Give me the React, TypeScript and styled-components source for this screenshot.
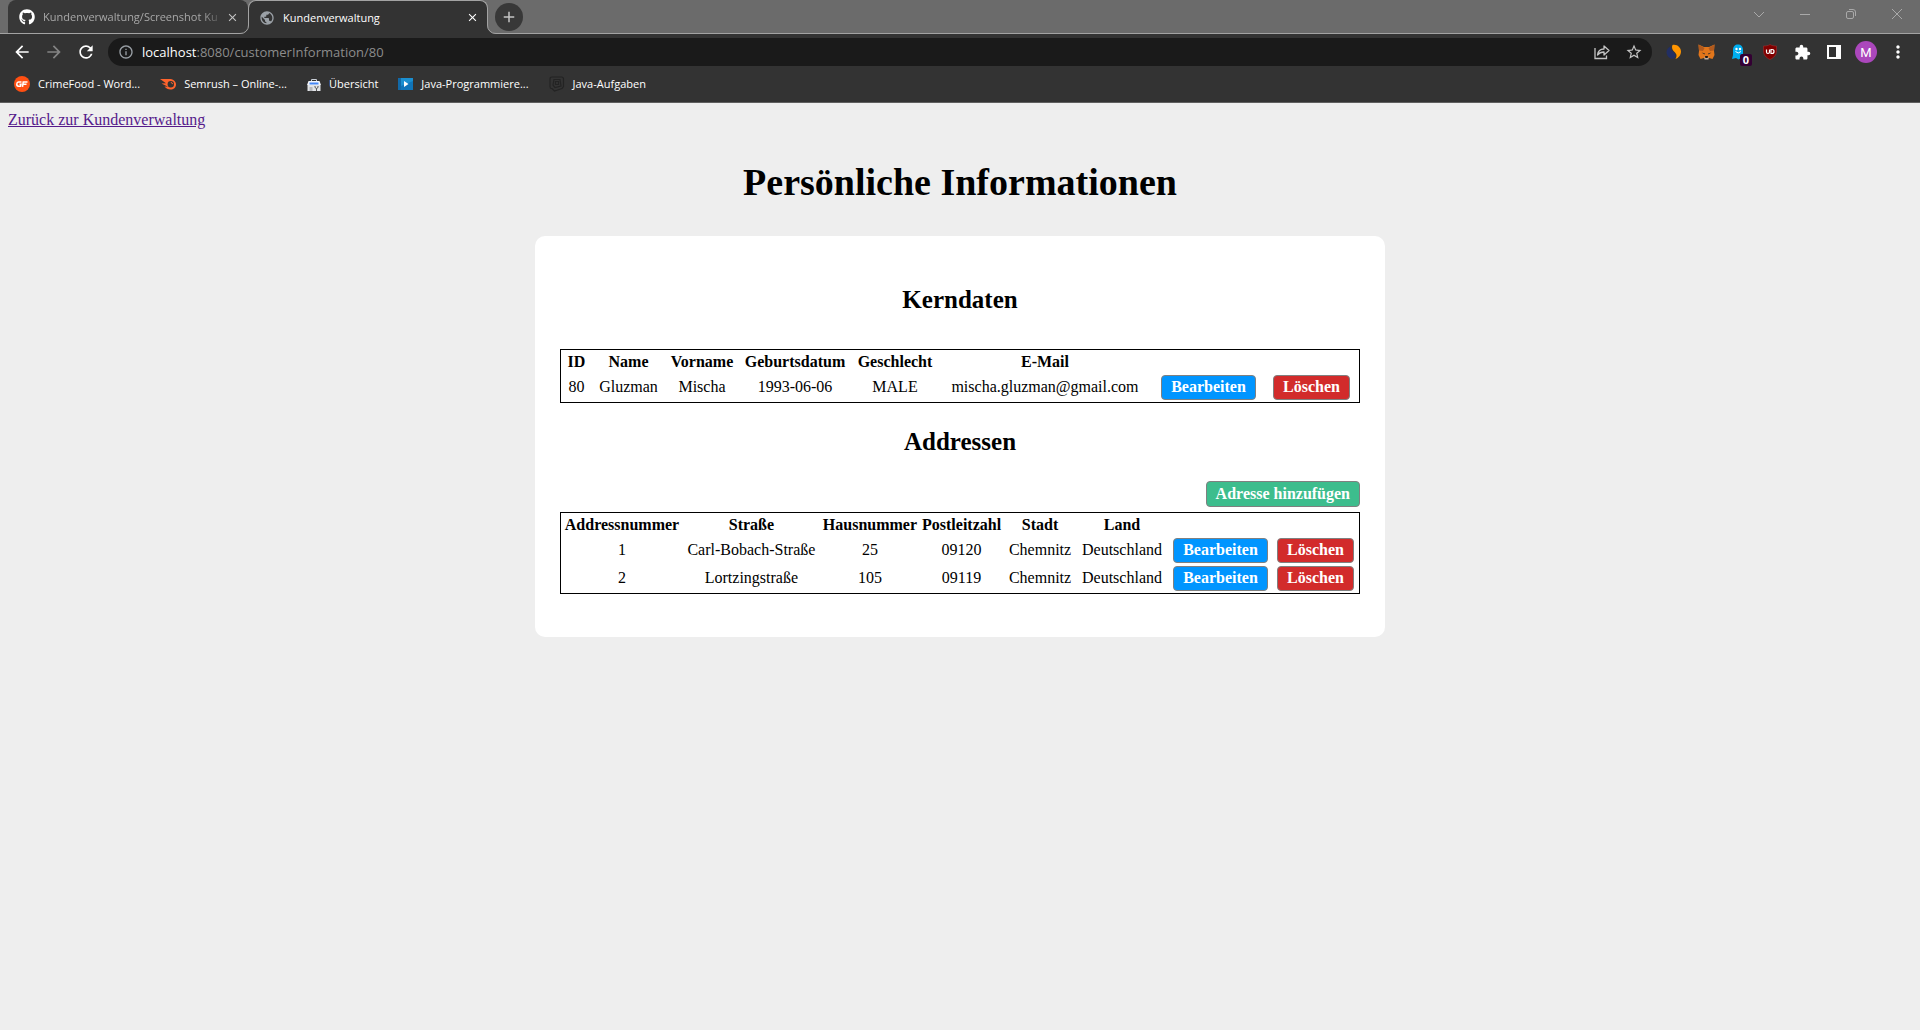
import React from "react";
import styled, { createGlobalStyle } from "styled-components";
import { FaGithub } from "react-icons/fa";
import {
  MdAdd,
  MdArrowBack,
  MdArrowForward,
  MdClose,
  MdExtension,
  MdInfoOutline,
  MdMoreVert,
  MdPublic,
  MdRefresh,
  MdStarBorder,
} from "react-icons/md";

const GlobalStyle = createGlobalStyle`
  * { box-sizing: border-box; }
  body {
    margin: 0;
    background: #eee;
    color: #000;
    font-family: "Liberation Serif", "Times New Roman", serif;
    font-size: 16px;
  }
  button, input { font: inherit; }
`;

/* ---------- browser frame ---------- */

const Frame = styled.header`
  background: #333;
  color: #fff;
  border-bottom: 1px solid #5f5f5f;
  font-family: "Open Sans", "Noto Sans", sans-serif;
  font-size: 11px;
`;

const TabStrip = styled.div`
  display: flex;
  height: 34px;
  padding-left: 8px;
  background: #6b6b6b;
  box-shadow: inset 0 -1px #a3a3a3;
`;

const Tab = styled.div<{ $active?: boolean }>`
  position: relative;
  display: flex;
  align-items: center;
  width: 240px;
  height: ${(p) => (p.$active ? 34 : 33)}px;
  padding: 0 7px 0 10px;
  border-radius: 8px 8px 0 0;
  background: ${(p) => (p.$active ? "#333" : "#383838")};
  color: ${(p) => (p.$active ? "#fff" : "#a8a8a8")};
  border: ${(p) => (p.$active ? "1px solid #a3a3a3" : "1px solid #383838")};
  border-bottom: 0;
`;

const TabTitle = styled.span<{ $fade?: boolean }>`
  flex: 1;
  margin-left: 8px;
  white-space: nowrap;
  line-height: 18px;
  mask-image: ${(p) => (p.$fade ? "linear-gradient(to right, #000 88%, transparent)" : "none")};
`;

const Flare = styled.svg<{ $side: "left" | "right" }>`
  position: absolute;
  bottom: 0;
  ${(p) => p.$side}: -9px;
  transform: ${(p) => (p.$side === "right" ? "scaleX(-1)" : "none")};
`;

const IconButton = styled.button<{ $w: number; $color?: string }>`
  display: flex;
  align-items: center;
  justify-content: center;
  flex: none;
  width: ${(p) => p.$w}px;
  height: 28px;
  padding: 0;
  border: 0;
  background: none;
  color: ${(p) => p.$color ?? "#fff"};
`;

const NewTab = styled(IconButton)`
  margin-left: 7px;
  border-radius: 50%;
  background: #383838;
  align-self: center;
`;

const WindowControls = styled.div`
  display: flex;
  margin-left: auto;
`;

const Toolbar = styled.div`
  display: flex;
  align-items: center;
  height: 36px;
  padding: 0 6px;
`;

const AddressBar = styled.label`
  display: flex;
  align-items: center;
  flex: 1;
  height: 28px;
  margin: 0 6px;
  padding: 0 2px;
  border-radius: 14px;
  background: #1a1a1a;
  color: #fff;
  font-size: 13px;
`;

const AddressInput = styled.input`
  flex: 1;
  min-width: 0;
  padding: 0;
  border: 0;
  outline: 0;
  background: none;
  color: #8c8c8c;
`;

const Avatar = styled.span`
  display: grid;
  place-items: center;
  width: 22px;
  height: 22px;
  border-radius: 50%;
  background: #ab47bc;
  font-family: Roboto, sans-serif;
  font-size: 13px;
`;

const BadgeHolder = styled.span`
  position: relative;
  display: flex;
`;

const Badge = styled.span`
  position: absolute;
  left: 9px;
  top: 10px;
  width: 12px;
  height: 12px;
  border-radius: 2px;
  background: #330033;
  font-size: 11px;
  font-weight: 700;
  line-height: 12px;
  text-align: center;
`;

const Bookmarks = styled.nav`
  display: flex;
  align-items: center;
  gap: 20px;
  height: 32px;
  padding: 0 14px 4px;
`;

const Bookmark = styled.a`
  display: flex;
  align-items: center;
  gap: 8px;
  color: #fff;
  line-height: 18px;
  text-decoration: none;
  white-space: nowrap;
`;

const CloseTab = ({ color }: { color: string }) => (
  <IconButton $w={16} $color={color} aria-label="Tab schließen">
    <MdClose size={13} />
  </IconButton>
);

const TabFlare = ({ side }: { side: "left" | "right" }) => (
  <Flare $side={side} width="9" height="9" viewBox="0 0 9 9" aria-hidden="true">
    <path d="M0 8.5 A8 8 0 0 0 8.5 0 H9 V9 H0 Z" fill="#333" />
    <path d="M0 8.5 A8 8 0 0 0 8.5 0" fill="none" stroke="#a3a3a3" />
  </Flare>
);

const ShareIcon = () => (
  <svg width="16" height="16" viewBox="0 0 16 16" fill="none" stroke="#c4c4c4" strokeWidth="1.3">
    <path d="M1 4 V14.5 H12.5 V11.5" />
    <path d="M3.5 11 C4 7 6.500 5 10 5 V2 L15 6.500 L10 11 V8 C7 8 5 9 3.500 11 Z" strokeLinejoin="round" />
  </svg>
);

const SwirlIcon = () => (
  <svg width="16" height="16" viewBox="0 0 16 16">
    <path d="M6.500 1 C11.500 0 15 4 15 7.500 C15 11 12.500 14 9.500 15 C12 11 9.500 9 8 7.500 C6 5.500 5.500 3 6.500 1 Z" fill="#ff9500" />
    <path d="M4.500 2.500 C4 7 10 8 9.500 12 C9 14 7.500 15 6 14.800 C2 14 0.500 10.500 0.500 8 C0.500 5.500 2.500 3 4.500 2.500 Z" fill="#222f63" />
  </svg>
);

const FoxIcon = () => (
  <svg width="17" height="16" viewBox="0 0 17 16">
    <path d="M0.500 0.500 L6 3 H11 L16.500 0.500 L16 7 L16.500 11 L14.500 15 L11 14 H6 L2.500 15 L0.500 11 L1 7 Z" fill="#e2761b" />
    <path d="M0.500 0.500 L6.500 4 L5 7 L1 6.500 Z M16.500 0.500 L10.500 4 L12 7 L16 6.500 Z" fill="#b05a1e" />
    <path d="M3.500 8.500 L7 9.500 L6.500 10.500 Z M13.500 8.500 L10 9.500 L10.500 10.500 Z" fill="#2b2b2b" />
    <path d="M6 12.500 L7 14 H10 L11 12.500 L10.500 15.500 H6.500 Z" fill="#c0ad9e" />
    <path d="M7 12 H10 L9.500 14 H7.500 Z" fill="#161616" />
  </svg>
);

const GhostIcon = () => (
  <svg width="14" height="16" viewBox="0 0 14 16">
    <path d="M2 6 C2 2.500 4 0.500 7 0.500 C10.500 0.500 12 3 12 6 V11 L13 14.500 L10 14 L7.500 15.500 L5 14 L1 15 L2 11 Z" fill="#00aef0" />
    <circle cx="5.500" cy="5" r="1.200" fill="#fff" />
    <circle cx="9" cy="5" r="1.200" fill="#fff" />
    <path d="M4.500 7.500 Q7.200 10.500 10 7.500" fill="none" stroke="#fff" />
  </svg>
);

const ShieldIcon = () => (
  <svg width="16" height="16" viewBox="0 0 16 16">
    <path d="M8 0.500 C10 1.800 12 2 14.500 2 V7 C14.500 11 12 13.500 8 15.500 C4 13.500 1.500 11 1.500 7 V2 C4 2 6 1.800 8 0.500 Z" fill="#800000" stroke="#a33" strokeWidth="0.500" />
    <path d="M4.500 5.500 V8 Q4.500 9.500 6 9.500 T7.500 8 V5.500 M9 5.500 V9.500 H10 Q12 9.500 12 7.500 T10 5.500 Z" fill="none" stroke="#fff" strokeWidth="1.200" />
  </svg>
);

const SidePanelIcon = () => (
  <svg width="14" height="14" viewBox="0 0 14 14">
    <path d="M0 0 H14 V14 H0 Z M2 2 V12 H9 V2 Z" fill="#fff" fillRule="evenodd" />
  </svg>
);

const CrimeFoodIcon = () => (
  <svg width="16" height="16" viewBox="0 0 16 16">
    <circle cx="8" cy="8" r="8" fill="#ff4f12" />
    <path d="M7.500 6 H4.500 Q3 6 2.800 8 T4.500 10.200 H6.500 L7 8.200 H5.500 M8.500 10.800 L9.200 6 H13.500 M9 8.300 H12.500" fill="none" stroke="#fff" strokeWidth="1.500" />
  </svg>
);

const SemrushIcon = () => (
  <svg width="16" height="16" viewBox="0 0 16 16">
    <path d="M0 3 H9 C13 3 16 5 16 8.500 C16 11.500 13.500 13.500 10.500 13.500 C8 13.500 6 12.500 4.500 10.500 L8 10.800 L1.500 7.500 L6 7.200 Z" fill="#ff642d" />
    <circle cx="10.800" cy="8.200" r="3.200" fill="#333" />
    <path d="M10.800 6.500 A1.800 1.800 0 0 1 12.600 8.200" fill="none" stroke="#ff642d" />
  </svg>
);

const ToolboxIcon = () => (
  <svg width="14" height="14" viewBox="0 0 14 14">
    <path d="M4.500 4.500 V2.500 H9.500 V4.500" fill="none" stroke="#c9ced6" />
    <path d="M1.500 4 H12.500 L14 8 H0 Z" fill="#f1f4fa" />
    <path d="M2.500 5.500 H11.500 V7.500 H2.500 Z" fill="#4285f4" />
    <path d="M0.500 8 H13.500 V14 H0.500 Z" fill="#e1e3e6" />
    <path d="M2.500 10 H5.500 V14 H2.500 Z" fill="#b4b7bc" />
    <path d="M8 9 V10.500 L9.500 11.500 L11 10.500 V9 M9.500 11.500 V14" fill="none" stroke="#555" />
  </svg>
);

const VideoIcon = () => (
  <svg width="15" height="12" viewBox="0 0 15 12">
    <path d="M0 0 H15 V12 H0 Z" fill="#1b8fd0" />
    <path d="M0 0 H3 V12 H0 Z" fill="#1269a8" />
    <path d="M3 8 L15 3 V12 H3 Z" fill="#0f75ba" />
    <path d="M6 3 L10.500 6 L6 9 Z" fill="#fff" />
  </svg>
);

const CubeIcon = () => (
  <svg width="16" height="16" viewBox="0 0 16 16" fill="none" stroke="#232323" strokeWidth="1.200">
    <path d="M3 1 H12.500 Q14.500 1 14.500 3 V10.500 L13 12.500 L5.500 15 L3 12.500 H2.500 Q1 12.500 1 10.500 V3 Q1 1 3 1 Z" />
    <path d="M5 3.500 H11 L12 10 L6 11.500 L4 9 Z M6.500 5.500 H9.500 V8.500 H6.500 Z" />
  </svg>
);

const bookmarks = [
  { label: "CrimeFood - Word...", icon: <CrimeFoodIcon /> },
  { label: "Semrush – Online-...", icon: <SemrushIcon /> },
  { label: "Übersicht", icon: <ToolboxIcon /> },
  { label: "Java-Programmiere...", icon: <VideoIcon /> },
  { label: "Java-Aufgaben", icon: <CubeIcon /> },
];

const windowControls = [
  { label: "Tabs durchsuchen", path: "M1 4 L6 9 L11 4" },
  { label: "Minimieren", path: "M1 6.500 H11" },
  { label: "Verkleinern", path: "M3 3.500 H7 Q8.500 3.500 8.500 5 V9 Q8.500 10.500 7 10.500 H3 Q1.500 10.500 1.500 9 V5 Q1.500 3.500 3 3.500 Z M4 1.500 H8 Q10.500 1.500 10.500 4 V8" },
  { label: "Schließen", path: "M1 1 L11 11 M11 1 L1 11" },
];

const extensions = [
  { label: "Swirl", icon: <SwirlIcon /> },
  { label: "MetaMask", icon: <FoxIcon /> },
  { label: "Ghostery", icon: <BadgeHolder><GhostIcon /><Badge>0</Badge></BadgeHolder> },
  { label: "uBlock", icon: <ShieldIcon /> },
  { label: "Erweiterungen", icon: <MdExtension size={17} /> },
  { label: "Seitenleiste", icon: <SidePanelIcon /> },
  { label: "Profil", icon: <Avatar>M</Avatar> },
  { label: "Menü", icon: <MdMoreVert size={20} /> },
];

const BrowserFrame = () => (
  <Frame>
    <TabStrip>
      <Tab>
        <FaGithub size={16} color="#fff" />
        <TabTitle $fade>Kundenverwaltung/Screenshot Ku</TabTitle>
        <CloseTab color="#c4c4c4" />
      </Tab>
      <Tab $active>
        <TabFlare side="left" />
        <MdPublic size={16} color="#9aa0a6" />
        <TabTitle>Kundenverwaltung</TabTitle>
        <CloseTab color="#fff" />
        <TabFlare side="right" />
      </Tab>
      <NewTab $w={28} $color="#c4c4c4" aria-label="Neuer Tab">
        <MdAdd size={18} />
      </NewTab>
      <WindowControls>
        {windowControls.map((c) => (
          <IconButton key={c.label} $w={46} aria-label={c.label}>
            <svg width="12" height="12" viewBox="0 0 12 12" fill="none" stroke="#a9a9a9">
              <path d={c.path} />
            </svg>
          </IconButton>
        ))}
      </WindowControls>
    </TabStrip>
    <Toolbar>
      <IconButton $w={32} aria-label="Zurück"><MdArrowBack size={20} /></IconButton>
      <IconButton $w={32} $color="#848484" aria-label="Vorwärts"><MdArrowForward size={20} /></IconButton>
      <IconButton $w={32} aria-label="Neu laden"><MdRefresh size={20} /></IconButton>
      <AddressBar>
        <IconButton as="span" $w={32} $color="#9aa0a6"><MdInfoOutline size={16} /></IconButton>
        <span>localhost</span>
        <AddressInput aria-label="Adresse" defaultValue=":8080/customerInformation/80" />
        <IconButton $w={32} aria-label="Teilen"><ShareIcon /></IconButton>
        <IconButton $w={32} $color="#c4c4c4" aria-label="Lesezeichen"><MdStarBorder size={18} /></IconButton>
      </AddressBar>
      {extensions.map((e) => (
        <IconButton key={e.label} $w={32} aria-label={e.label}>{e.icon}</IconButton>
      ))}
    </Toolbar>
    <Bookmarks>
      {bookmarks.map((b) => (
        <Bookmark key={b.label} href="#">
          {b.icon}
          {b.label}
        </Bookmark>
      ))}
    </Bookmarks>
  </Frame>
);

/* ---------- page ---------- */

const Page = styled.main`
  padding: 8px;
`;

const BackLink = styled.a`
  display: block;
  width: fit-content;
  line-height: 18px;
  color: #551a8b;
`;

const Title = styled.h1`
  margin: 31px 0;
  font-size: 38px;
  line-height: 45px;
  text-align: center;
`;

const Card = styled.section`
  width: 100%;
  max-width: 850px;
  margin: 0 auto;
  padding: 25px 25px 43px;
  border-radius: 10px;
  background: #fff;
`;

const SectionTitle = styled.h2<{ $first?: boolean }>`
  margin: ${(p) => (p.$first ? "25px 0 36px" : "25px 0 26px")};
  font-size: 25px;
  line-height: 27px;
  text-align: center;
`;

const DataTable = styled.table`
  width: 100%;
  border: 1px solid #000;
  border-spacing: 2px;
  text-align: center;
  line-height: 18px;

  th {
    height: 20px;
    padding: 1px;
  }
  td {
    height: 26px;
    padding: 0 1px;
  }
`;

const AddRow = styled.div`
  display: flex;
  justify-content: flex-end;
  margin-bottom: 5px;
`;

const tones = { edit: "#0095ff", remove: "#d22b2b", add: "#3dbd8d" };

const ActionButton = styled.button<{ $tone: keyof typeof tones }>`
  display: block;
  margin: 0 auto;
  height: ${(p) => (p.$tone === "add" ? 26 : 25)}px;
  padding: 0 9px;
  border: 1px solid #808080;
  border-radius: 4px;
  background: ${(p) => tones[p.$tone]};
  color: #fff;
  font-weight: 700;
  line-height: 18px;
  white-space: nowrap;
  cursor: pointer;

  ${AddRow} & {
    margin: 0;
  }
`;

type TableProps = { columns: string[]; rows: string[][]; widths: number[] };

const RecordTable = ({ columns, rows, widths }: TableProps) => (
  <DataTable>
    <colgroup>
      {widths.map((w, i) => (
        <col key={i} width={w} />
      ))}
    </colgroup>
    <thead>
      <tr>
        {columns.map((c) => (
          <th key={c} scope="col">{c}</th>
        ))}
        <th />
        <th />
      </tr>
    </thead>
    <tbody>
      {rows.map((r) => (
        <tr key={r[0]}>
          {r.map((v, i) => (
            <td key={i}>{v}</td>
          ))}
          <td><ActionButton $tone="edit">Bearbeiten</ActionButton></td>
          <td><ActionButton $tone="remove">Löschen</ActionButton></td>
        </tr>
      ))}
    </tbody>
  </DataTable>
);

export default function App() {
  return (
    <>
      <GlobalStyle />
      <BrowserFrame />
      <Page>
        <BackLink href="#">Zurück zur Kundenverwaltung</BackLink>
        <Title>Persönliche Informationen</Title>
        <Card>
          <SectionTitle $first>Kerndaten</SectionTitle>
          <RecordTable
            columns={["ID", "Name", "Vorname", "Geburtsdatum", "Geschlecht", "E-Mail"]}
            rows={[["80", "Gluzman", "Mischa", "1993-06-06", "MALE", "mischa.gluzman@gmail.com"]]}
            widths={[27, 73, 70, 112, 84, 212, 111, 91]}
          />
          <SectionTitle>Addressen</SectionTitle>
          <AddRow>
            <ActionButton $tone="add">Adresse hinzufügen</ActionButton>
          </AddRow>
          <RecordTable
            columns={["Addressnummer", "Straße", "Hausnummer", "Postleitzahl", "Stadt", "Land"]}
            rows={[
              ["1", "Carl-Bobach-Straße", "25", "09120", "Chemnitz", "Deutschland"],
              ["2", "Lortzingstraße", "105", "09119", "Chemnitz", "Deutschland"],
            ]}
            widths={[118, 137, 96, 83, 70, 90, 103, 83]}
          />
        </Card>
      </Page>
    </>
  );
}
